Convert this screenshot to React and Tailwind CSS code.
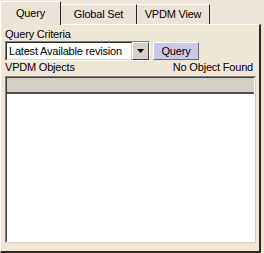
import React from "react";

const font = { fontFamily: "'Liberation Sans', Arial, sans-serif" };

const Tab = ({ label, active, width }) => (
  <div
    className={`flex items-center justify-center text-[11px] tracking-[-0.2px] text-black ${
      active
        ? "h-[24px] border-l border-t border-white bg-[#ece2d6] relative z-10 -mb-px"
        : "h-[20px] mt-[3px] border-t border-white bg-[#ece2d6]"
    } border-r border-r-[#2a2a2a]`}
    style={{ width }}
  >
    {label}
  </div>
);

const App = () => {
  return (
    <div className="w-[264px] h-[253px] bg-[#ede4d9] text-black tracking-[-0.2px]" style={font}>
      <div className="flex items-end h-[24px]">
        <Tab label="Query" active width={61} />
        <Tab label="Global Set" width={76} />
        <Tab label="VPDM View" width={73} />
      </div>
      <div className="w-[261px] h-[229px] border-t border-l border-white border-r-2 border-b-2 border-r-[#2a2a2a] border-b-[#2a2a2a] bg-[#f0e6d6] px-[4px] pt-[3px]">
        <div className="text-[11px] leading-[13px]">Query Criteria</div>
        <div className="flex items-center gap-[3px]">
          <div className="flex items-center w-[145px] h-[20px] border border-t-[#7f7f7f] border-l-[#7f7f7f] border-r-white border-b-white">
            <div className="flex-1 h-full bg-white border border-t-[#2a2a2a] border-l-[#2a2a2a] border-r-[#d8d0c4] border-b-[#d8d0c4] text-[11px] leading-[16px] pl-[2px] whitespace-nowrap overflow-hidden">
              Latest Available revision
            </div>
            <div className="w-[17px] h-full flex items-center justify-center bg-[#d4d0c8] border border-t-white border-l-white border-r-[#404040] border-b-[#404040]">
              <svg width="7" height="4" viewBox="0 0 7 4">
                <path d="M0 0h7L3.5 4z" fill="#000" />
              </svg>
            </div>
          </div>
          <div className="w-[46px] h-[18px] flex items-center justify-center text-[11px] bg-[#c9c9e6] border border-t-white border-l-white border-r-[#6a6a80] border-b-[#6a6a80]">
            Query
          </div>
        </div>
        <div className="flex justify-between text-[11px] leading-[13px] pr-[2px]">
          <span>VPDM Objects</span>
          <span>No Object Found</span>
        </div>
        <div className="mt-[2px] w-[251px] h-[167px] bg-white border border-t-[#7f7f7f] border-l-[#7f7f7f] border-r-[#d4d0c8] border-b-[#d4d0c8]">
          <div className="h-full border border-t-[#404040] border-l-[#404040] border-r-white border-b-white">
            <div className="h-[16px] bg-[#d4d0c8] border-b-2 border-b-[#505050]" />
          </div>
        </div>
      </div>
    </div>
  );
};

export default App;
